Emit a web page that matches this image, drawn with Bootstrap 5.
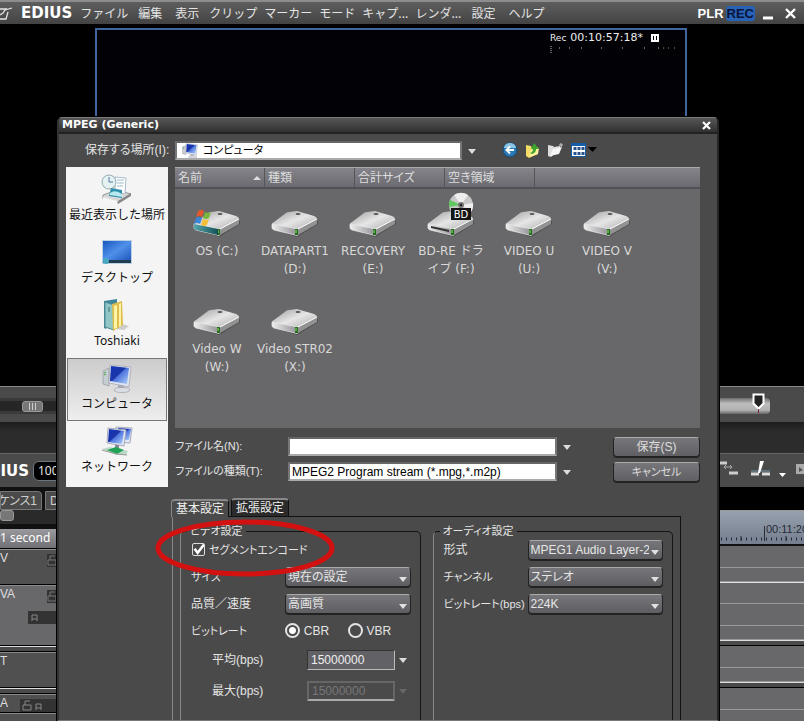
<!DOCTYPE html>
<html lang="ja">
<head>
<meta charset="utf-8">
<meta name="viewport" content="width=device-width, initial-scale=1">
<title>EDIUS</title>
<link href="https://cdn.jsdelivr.net/npm/bootstrap@5.3.0/dist/css/bootstrap.min.css" rel="stylesheet">
<style>
:root{--face:#4a4a4a;--line:#8a8a8a;--pane:#68686a}
body{background:#000;color:#e4e4e4;font:12px/18px "Noto Sans","Noto Sans CJK JP",sans-serif}
a{color:inherit;text-decoration:none}
button{font:inherit;color:inherit}
.bare{background:none;border:0;padding:0}
.brand{font:bold 15px/20px "DejaVu Sans",sans-serif;color:#fff}
.ui{font-family:"Liberation Sans","Noto Sans CJK JP",sans-serif;font-feature-settings:"palt"}
.ui input,.ui select,.ui button{font-family:inherit;font-feature-settings:inherit}
.kana{font-size:11px}
/* main window */
.app-menu{height:24px;background:linear-gradient(#5e5e5e,#434343);border-top:2px solid #8d8d8d;font-family:"Noto Sans CJK JP",sans-serif}
.menu-list{gap:7px;margin-left:8px}
.menu-wide{padding:0 3px}
.mode{font:bold 13px/15px "Liberation Sans",sans-serif}
.bare.mode-on{background:#2862b4;color:#08143a;border-radius:3px;padding:0 1px;margin-left:2px}
.preview{height:362px;padding:4px 117px 0 95px}
.screen{border:2px solid #3f659f;border-bottom:0;background:#020206;padding:0 9px}
.timecode{font:11px/16px "DejaVu Sans",sans-serif;color:#eee}
.timecode small{font-size:9px}
.seek{height:36px;background:var(--face);border-top:1px solid var(--line);padding-top:11px}
.seek>div{padding-right:34px}
.groove{height:16px;background:#262626;border:3px solid #3a3a3a;border-width:3px 0;padding-left:22px}
.grip{width:21px;height:11px;border-radius:3px;background:#777;border:1px solid #999}
.grip-half{width:14px}
.seek-fill{width:50px;height:16px;background:linear-gradient(#6e6e6e,#bdbdbd 35%,#b2b2b2 75%,#666);border-radius:0 4px 4px 0}
.band{height:32px;background:linear-gradient(#1c1c1c,#2c2c2c 30%);border-bottom:1px solid #666}
.tools{height:33px;background:var(--face)}
.crop-end{overflow:hidden;white-space:nowrap}
.tail{width:29px}
.heads{width:56px}
.seq{height:23px;background:#111;gap:3px}
.seq a{background:#4a4a4a;border:1px solid #777;border-radius:0 4px 0 0;height:19px;color:#ccc}
.seq .now{width:42px}
.zoombar{height:19px;background:#2a2a2a;border-bottom:5px solid #111}
.unit{height:20px;background:linear-gradient(#9a9a9e,#707074);border-bottom:1px solid #000;color:#fff}
.head{background:#505050;border-top:1px solid #8b8b8b;border-bottom:1px solid #000;font:12px/16px "Liberation Sans",sans-serif;color:#ddd}
.lock{background:#333;color:#777;width:28px;height:13px}
.lock-one{width:9px}
.lock-two{width:36px}
.head-s{height:36px}.head-l{height:61px;background:#68686a}
.view{width:85px}
.lane{background:var(--pane);border-bottom:1px solid #999}
.lane-a{height:22px}.lane-b{height:14px}
.ruler{height:36px;background:linear-gradient(#97a0ad,#747e8e);border-top:1px solid #999;border-bottom:2px solid #111}
.divider{height:6px;background:var(--face);border-top:1px solid #ddd;border-bottom:1px solid #000}
.marker{position:absolute;top:393px;right:39px}
/* dialog */
.dialog{position:absolute;top:117px;left:57px;right:85px;bottom:0;background:var(--face);border:1px solid #777;border-right:2px solid #262626;border-left:2px solid #333;border-radius:5px 5px 0 0;overflow:hidden;box-shadow:0 0 0 1px #000}
.caption-bar{height:16px;background:linear-gradient(#575757,#303030);border-bottom:2px solid #222;padding:0 6px 0 3px;font:bold 11px/14px "DejaVu Sans",sans-serif;color:#fff}
.look{height:33px;padding:7px 17px 8px 26px}
.look label{width:90px}
.place-box{width:287px}
.look-tools{margin-left:14px;gap:8px;padding-left:6px}
.field{height:19px;background:#fff;color:#000;border:2px solid #777;border-top-color:#666;border-bottom:2px solid #aaa;border-radius:0;padding:0 0 0 2px;font-size:12px;line-height:15px;min-width:0}
.drop{width:20px;height:18px}
.drop::before{content:"";display:block;width:0;margin:2px auto 0;border:4px solid transparent;border-top:5px solid #ddd;border-bottom:0}
.drop.off::before{border-top-color:#666}
.middle{padding:0 17px 0 7px;gap:7px}
.places{width:102px;background:#f4f4f4;height:320px;padding:2px 1px}
.place{height:63px;color:#111;border:1px solid transparent;padding-top:3px}
.place.on{border-color:#777;background:linear-gradient(#ccc,#eee)}
.place svg{width:32px;height:32px}
.place span{line-height:18px;margin-top:1px;white-space:nowrap}
.files{height:261px;background:var(--pane)}
.cols{height:22px;background:linear-gradient(#84848a,#6a6a70);border-top:1px solid #aaa;border-bottom:2px solid #525256;color:#ddd}
.cols button{width:90px;text-align:left;border-right:1px solid #555;padding:0 3px;height:19px}
.drives{padding:1px 3px 0}
.drive{width:78px;height:98px;color:#d8d8d8;font:12px/18px "DejaVu Sans","Noto Sans CJK JP",sans-serif;padding-top:2px}
.drive svg{width:50px;height:46px;margin-bottom:4px}
.drive span{white-space:nowrap}
.names{padding-top:9px}
.fname{height:25px}
.fname label{width:113px}
.push{width:87px;height:20px;margin-left:36px;border:1px solid #222;border-top-color:#aaa;border-radius:4px;background:linear-gradient(#77777b,#606064);padding:0;line-height:15px;color:#ddd;box-shadow:0 1px #222}
.settings{padding-top:15px}
.tabs{margin:-4px 0 0 -4px;gap:2px}
.tabs button{height:18px;padding:0 4px;border:1px solid #111;border-bottom:0;border-top:2px solid #888;border-radius:4px 4px 0 0;background:#2b2b2b;line-height:15px;color:#eee}
.tabs .on{background:var(--face);border-left-color:#888;position:relative;margin-bottom:-1px}
.sheet{margin:0 19px 0 -3px;border:1px solid #111;border-left-color:#888;padding:5px 7px 0;gap:12px;height:240px}
.group{flex:1 1 0;min-width:0;border:1px solid #151515;border-left-color:#888;border-radius:5px;padding:0 9px 0 10px;margin:0;height:240px}
.group legend{float:none;width:auto;line-height:18px;margin:0 0 -4px -4px;padding:0 3px;background:var(--face)}
.opt{height:27px}
.opt>label:first-child{width:94px;white-space:nowrap}
.sound .opt>label:first-child{width:84px}
.choice{height:20px;min-width:0;flex:1;color:#e6e6e6;border:1px solid #222;border-top-color:#aaa;border-radius:4px;padding:0 13px 0 2px;font-size:12px;line-height:16px;background:url("data:image/svg+xml,%3Csvg xmlns='http://www.w3.org/2000/svg' viewBox='0 0 8 5'%3E%3Cpath fill='%23e0e0e0' d='M0 0h8L4 5z'/%3E%3C/svg%3E") right 3px bottom 4px/8px 5px no-repeat,linear-gradient(#77777b,#5e5e62);box-shadow:0 1px #222}
.tick{appearance:none;width:13px;height:13px;border:1px solid #ddd;border-radius:2px;margin:0 0 0 1px;background:url("data:image/svg+xml,%3Csvg xmlns='http://www.w3.org/2000/svg' viewBox='0 0 12 12'%3E%3Cpath fill='none' stroke='%23fff' stroke-width='2.4' d='M2 5l3 4 6-8'/%3E%3C/svg%3E") center/12px no-repeat}
.dot{appearance:none;width:15px;height:15px;border:2px solid #e4e4e4;border-radius:50%;margin:0 4px 0 0}
.dot:checked{background:radial-gradient(#fff 0 3px,transparent 4px)}
.dot+label{width:44px}
.rate{height:31px;padding-left:21px}
.rate input{width:88px;height:20px;background:#626266;color:#eee;border:1px solid #333;border-bottom-color:#bbb;border-right-color:#bbb;font-size:12px;line-height:16px;padding:0 3px}
.rate input:disabled{background:var(--face);border:2px solid #666;border-bottom-color:#aaa;color:#777}
.rate label{width:95px;flex-shrink:0}
.rate .drop{width:18px}
.ring{position:absolute;left:95px;top:400px;width:182px;height:60px;pointer-events:none}
</style>
<script src="https://cdn.jsdelivr.net/npm/bootstrap@5.3.0/dist/js/bootstrap.bundle.min.js"></script>
</head>
<body class="vh-100 overflow-hidden position-relative">
<svg class="position-absolute" width="0" height="0" aria-hidden="true">
<defs>
<linearGradient id="gTop" x1="0" y1="0" x2="1" y2="1"><stop offset="0" stop-color="#999"/><stop offset=".5" stop-color="#e6e6e6"/><stop offset="1" stop-color="#aaa"/></linearGradient>
<linearGradient id="gFront"><stop offset="0" stop-color="#eee"/><stop offset="1" stop-color="#8e8e93"/></linearGradient>
<linearGradient id="gBlue" x1="0" y1="0" x2="1" y2="1"><stop offset="0" stop-color="#1534b8"/><stop offset=".45" stop-color="#1b35a8"/><stop offset=".5" stop-color="#4d74dd"/><stop offset="1" stop-color="#b5d4fb"/></linearGradient>
<linearGradient id="gDesk" x1="0" y1="0" x2="1" y2="1"><stop offset="0" stop-color="#1a56c0"/><stop offset=".5" stop-color="#4f90ea"/><stop offset="1" stop-color="#2158bd"/></linearGradient>
<linearGradient id="gTeal"><stop offset="0" stop-color="#56a6ac"/><stop offset="1" stop-color="#155157"/></linearGradient>
</defs>
<symbol id="hdd" viewBox="0 0 50 46">
<path d="M5 38l22 7 21-13v-3L28 42z" fill="#333" opacity=".5"/>
<path d="M2 32Q2 31 4 30L16 21q1-1 3-1l8-1 17 5q3 1 3 3L28 38z" fill="url(#gTop)"/>
<path d="M2 32l26 5v6q-1 1-3 0L4 38q-2-1-2-2z" fill="url(#gFront)" stroke="#eee" stroke-width=".7"/>
<path d="M28 37l19-10v5L28 43z" fill="#929292"/><path d="M28 37l19-10" stroke="#fff"/>
<ellipse cx="28" cy="22" rx="2.5" ry="1" fill="#555"/><rect x="25" y="37" width="3" height="6" fill="#276b20"/><path d="M26 38v3" stroke="#8fdf65"/>
</symbol>
<symbol id="osd" viewBox="0 0 50 46"><use href="#hdd"/><path d="M2 32l24 5v6L4 38q-2-1-2-2z" fill="url(#gTeal)"/>
<path d="M6 19q3-2 6 0l-2 6q-3-2-6 0z" fill="#df592d"/><path d="M13 20q3 2 6 0l-2 6q-3 2-6 0z" fill="#79b83c"/><path d="M4 26q3-2 6 0l-2 6q-3-2-6 0z" fill="#3b84d6"/><path d="M11 27q3 2 6 0l-2 6q-3 2-6 0z" fill="#f4be3a"/></symbol>
<symbol id="pc" viewBox="0 0 32 32"><path d="M2 9l6-3v18l-6-2z" fill="#c5ccd2" stroke="#8a9299" stroke-width=".6"/><path d="M3 11l2-1M3 13l2-1" stroke="#4a4"/><path d="M17 22h6v6h-6z" fill="#aab"/><ellipse cx="21" cy="28" rx="8" ry="2.6" fill="#d9dee4" stroke="#999" stroke-width=".6"/><path d="M9 3l21 2-2 20-20-4z" fill="#dce4ee" stroke="#99a" stroke-width=".6"/><path d="M10 4l18 2-2 16-17-3z" fill="url(#gBlue)"/></symbol>
</svg>

<header class="app-menu d-flex align-items-center pe-2">
<svg width="13" height="16" viewBox="0 0 13 16" fill="none" stroke="#e5e5e5" stroke-width="1.300"><path d="M0 4h7M0 14h6l2-7M0 10l3-2 2-3 7-2"/></svg>
<a href="#" class="brand ms-2">EDIUS</a>
<nav class="menu-list d-flex text-nowrap">
<a href="#">ファイル</a><a href="#" class="menu-wide">編集</a><a href="#" class="menu-wide">表示</a><a href="#">クリップ</a><a href="#">マーカー</a><a href="#">モード</a><a href="#">キャプ...</a><a href="#">レンダ...</a><a href="#" class="menu-wide">設定</a><a href="#" class="menu-wide">ヘルプ</a>
</nav>
<div class="ms-auto d-flex align-items-center text-white">
<button class="bare mode">PLR</button><button class="bare mode mode-on">REC</button>
<button class="bare ms-2" aria-label="最小化"><svg width="10" height="14" class="d-block"><path d="M0 12h10" stroke="#fff" stroke-width="3"/></svg></button>
<button class="bare ms-2 ps-1" aria-label="閉じる"><svg width="11" height="11" class="d-block"><path d="M1 1l9 9M10 1l-9 9" stroke="#fff" stroke-width="2.400"/></svg></button>
</div>
</header>

<main>
<section class="preview d-flex"><div class="screen flex-grow-1 d-flex justify-content-end">
<div class="timecode"><div class="d-flex align-items-center gap-1"><small>Rec</small><span>00:10:57:18*</span><svg width="8" height="8" class="ms-1"><path d="M0 0h8v8H0z" fill="#fff"/><path d="M2.500 2v4M5.500 2v4" stroke="#000"/></svg></div>
<svg width="126" height="8" class="d-block"><path d="M1 0v8" stroke="#bbb" stroke-dasharray="1 1"/><path d="M9 2h1M19 2h1M31 2h1M51 2h1M72 2h1M94 2h1M108 2h1" stroke="#ccc"/><path d="M113 2h1M118 2h1M124 2h1" stroke="#b84"/></svg></div>
</div></section>
<section class="seek"><div class="d-flex"><div class="groove flex-grow-1 d-flex align-items-center"><div class="grip d-flex justify-content-center align-items-center"><svg width="9" height="7"><path d="M1.500 0v7M4.500 0v7M7.500 0v7" stroke="#ccc"/></svg></div></div><div class="seek-fill"></div></div></section>
<section class="band"></section>
<section class="tools d-flex align-items-center">
<div class="d-flex"><div class="tail d-flex justify-content-end crop-end brand flex-shrink-0">EDIUS</div><span class="ms-1 ps-1 border border-secondary rounded bg-black text-nowrap">100T</span></div>
<svg class="ms-auto" width="86" height="24" viewBox="0 0 86 24"><path d="M0 4h9M11 14h9" stroke="#ccc" stroke-width="3"/><path d="M6 8h8M8 6l-2 2 2 2M12 6l2 2-2 2" stroke="#aaa" fill="none"/><path d="M33 15h8M44 15h8" stroke="#ddd" stroke-width="3"/><path d="M33 12h19" stroke="#79a"/><path d="M42 2h4l-4 12h-2z" fill="#fff"/><path d="M61 14h7l-3.500 4z" fill="#fff"/><path d="M78 5h8v10h-8z" fill="#aaa"/><path d="M81 8l4 3-4 2z" fill="#555"/></svg>
</section>
<section class="d-flex justify-content-between">
<div class="heads text-nowrap">
<div class="seq d-flex align-items-end ui"><a href="#" class="now d-flex justify-content-end crop-end flex-shrink-0 pe-1">シーケンス1</a><a href="#" class="px-1">D</a></div>
<div class="zoombar"><div class="grip grip-half"></div></div>
<div class="unit">1 second</div>
<div class="head head-s d-flex justify-content-between"><span>V</span><svg class="lock lock-one mt-1" viewBox="0 0 9 13"><path d="M1 6h8v5H1zM3 6V2h5" fill="none" stroke="#777"/></svg></div>
<div class="head head-l"><div class="d-flex justify-content-between"><span>VA</span><svg class="lock lock-one mt-1" viewBox="0 0 9 13"><path d="M1 6h8v5H1zM3 6V2h5" fill="none" stroke="#777"/></svg></div><svg class="lock d-block ms-auto mt-2" viewBox="0 0 28 13"><path d="M4 10V4h5v6M4 8h5" fill="none" stroke="#888"/></svg></div>
<div class="divider"></div>
<div class="head head-s">T</div><div class="divider"></div>
<div class="head d-flex justify-content-between"><span>A</span><svg class="lock lock-two mt-1" viewBox="0 0 36 13"><path d="M3 6h8v5H3zM5 6V2h5M16 11V5h5v6M16 9h5" fill="none" stroke="#888"/></svg></div><div class="head head-s"></div>
</div>
<div class="view text-nowrap overflow-hidden"><div class="seq bg-black"></div>
<div class="ruler d-flex"><svg width="85" height="34" class="flex-shrink-0"><path d="M45.500 15v15" stroke="#252b38"/><path d="M2 28h83" stroke="#252b38" stroke-width="3" stroke-dasharray="1 4"/><path d="M22 25v5M67 25v5" stroke="#252b38"/><text x="47" y="22" font-family="Liberation Sans" font-size="11" fill="#252b38">00:11:20</text></svg></div>
<div class="lane lane-a"></div><div class="lane lane-b"></div><div class="lane lane-a border-top border-black"></div><div class="lane lane-a"></div><div class="lane lane-b"></div><div class="divider"></div><div class="lane lane-a"></div><div class="lane lane-b"></div><div class="divider"></div><div class="lane lane-a"></div><div class="lane lane-a"></div></div>
</section>
</main>
<svg class="marker" width="13" height="20"><path d="M1.500 1.500h10v9l-5 5-5-5z" fill="#222" stroke="#fff" stroke-width="2"/><path d="M6.500 16v4" stroke="#723"/></svg>

<div class="dialog" role="dialog" aria-labelledby="cap">
<div class="caption-bar d-flex justify-content-between align-items-center"><span id="cap">MPEG (Generic)</span><button class="bare" aria-label="ダイアログを閉じる"><svg class="d-block" width="9" height="9"><path d="M1 1l7 7M8 1L1 8" stroke="#fff" stroke-width="2.200"/></svg></button></div>
<form>
<div class="look d-flex align-items-center ui"><label for="loc">保存する場所(I):</label>
<div class="field place-box d-flex align-items-center gap-1 p-0 flex-shrink-0"><svg width="18" height="15" viewBox="0 2 32 28" class="ms-1 flex-shrink-0"><use href="#pc" width="32" height="32"/></svg><input id="loc" class="bare kana w-100" value="コンピュータ"></div>
<button type="button" class="bare drop" aria-label="場所の一覧"></button>
<div class="look-tools d-flex">
<button type="button" class="bare" aria-label="戻る"><svg class="d-block" width="16" height="18" viewBox="0 0 16 18"><circle cx="8" cy="9" r="7" fill="#2a78b5" stroke="#15486f"/><path d="M2 7a6 5 0 0112 0z" fill="#8cc5e8"/><path d="M12 9H5M8 5.500L4.500 9 8 12.500" stroke="#fff" stroke-width="2" fill="none"/></svg></button>
<button type="button" class="bare" aria-label="上へ"><svg class="d-block" width="14" height="18" viewBox="0 0 14 18"><path d="M0 4l5 1 1 2 6-1v7l-9 4-3-2z" fill="#f2dc66"/><path d="M3 16l2-7 8-2-1 6z" fill="#fff0a0"/><path d="M6 13q4-1 4-5h3L8 2 5 8h2q0 3-3 4z" fill="#39a52c"/></svg></button>
<button type="button" class="bare" aria-label="新しいフォルダ"><svg class="d-block" width="15" height="18" viewBox="0 0 15 18"><path d="M0 4l5 1 1 1 6-1v3L3 16l-3-1z" fill="#ddd"/><path d="M2 15l3-7 9-2-3 7z" fill="#f6f6f6"/><path d="M13 2v4M11 4h4" stroke="#ccc"/></svg></button>
<button type="button" class="bare" aria-label="表示"><svg class="d-block" width="26" height="18" viewBox="0 0 26 18"><path d="M0 2h15v14H0z" fill="#165da8"/><path d="M1 5h13v10H1z" fill="#fff"/><path d="M2.500 6h3v3h-3zM6.500 6h3v3h-3zM10.500 6h3v3h-3zM2.500 11h3v3h-3zM6.500 11h3v3h-3zM10.500 11h3v3h-3z" fill="#28518a"/><path d="M17 6h9l-4.500 5z" fill="#000"/></svg></button>
</div></div>

<div class="middle d-flex">
<nav class="places flex-shrink-0 d-flex flex-column text-center">
<a href="#" class="place d-flex flex-column align-items-center"><svg viewBox="0 0 32 32"><path d="M2 22l14-5 14 4-13 9-15-4z" fill="#d8d8d8" stroke="#999"/><path d="M2 24l14 4v3L2 27z" fill="#f7f7f7"/><path d="M17 31V28l13-8v3z" fill="#888"/><path d="M14 4l11 1-1 16-10-2z" fill="#fff" stroke="#abc"/><path d="M16 7h7M16 10h7M16 13h6" stroke="#9bc"/><circle cx="8" cy="9" r="7" fill="#e5f2f4" stroke="#93a9ad"/><path d="M8 4v5h4" stroke="#579" fill="none"/><path d="M10 15l11 2v8l-13-2z" fill="#2f8faa"/><path d="M9 20q5-4 12 1v3l-12-2z" fill="#b7e9ee"/></svg><span>最近表示した場所</span></a>
<a href="#" class="place d-flex flex-column align-items-center"><svg viewBox="0 0 32 32"><path d="M1 4h30v24H1z" fill="#bcd0e3"/><path d="M2 5h28v19H2z" fill="url(#gDesk)"/><path d="M2 24h28v3H2z" fill="#213d50"/><circle cx="5" cy="25" r="3" fill="#49a7c0"/></svg><span>デスクトップ</span></a>
<a href="#" class="place d-flex flex-column align-items-center"><svg viewBox="0 0 32 32"><path d="M21 25l7 2-5 4-8-1z" fill="#ccc"/><path d="M3 2l13-2v6L5 30l-2-1z" fill="#3d859b"/><path d="M4 3l9 3v25l-9-3z" fill="#90c6c5" stroke="#528b91"/><path d="M11 5l10-3 1 24-10 6z" fill="#dfbd4d"/><path d="M13 7l3-1v23l-3 1zM18 5l2-1v23l-2 1z" fill="#fff3a8"/><path d="M8 8v5" stroke="#376"/></svg><span>Toshiaki</span></a>
<a href="#" class="place on d-flex flex-column align-items-center" aria-current="true"><svg viewBox="0 0 32 32"><use href="#pc"/></svg><span>コンピュータ</span></a>
<a href="#" class="place d-flex flex-column align-items-center"><svg viewBox="0 0 32 32"><path d="M15 2l16 1-2 15-13-1z" fill="#e1eaf4" stroke="#aab"/><path d="M17 3l13 1-2 11-11-1z" fill="url(#gBlue)"/><path d="M7 3l18 2-2 16-17-3z" fill="#e1eaf4" stroke="#aab"/><path d="M8 4l15 2-2 13-14-2z" fill="url(#gBlue)"/><path d="M14 20h4v4h-4z" fill="#889"/><path d="M1 24l8-2 18 4-2 4-9 0z" fill="#bcd8c8"/><path d="M6 25l9-3 8 3-7 4z" fill="#20a354"/><path d="M1 25l14 4 11 1" stroke="#999" fill="none"/></svg><span>ネットワーク</span></a>
</nav>
<div class="flex-grow-1">
<div class="files overflow-hidden">
<div class="cols d-flex ui"><button type="button" class="bare d-flex justify-content-between align-items-center">名前<svg width="8" height="4"><path d="M0 4l4-4 4 4z" fill="#ddd"/></svg></button><button type="button" class="bare">種類</button><button type="button" class="bare">合計サイズ</button><button type="button" class="bare">空き領域</button></div>
<div class="drives d-flex flex-wrap text-center">
<a href="#" class="drive"><svg><use href="#osd"/></svg><br><span>OS (C:)</span></a>
<a href="#" class="drive"><svg><use href="#hdd"/></svg><br><span>DATAPART1<br>(D:)</span></a>
<a href="#" class="drive"><svg><use href="#hdd"/></svg><br><span>RECOVERY<br>(E:)</span></a>
<a href="#" class="drive"><svg viewBox="0 0 50 46"><use href="#hdd"/><path d="M5 34l18 4v2L5 36z" fill="#333"/>
<circle cx="35" cy="13" r="12" fill="#c9c9c9"/><path d="M35 13L28 3a12 12 0 0114 0zM35 13l10 7a12 12 0 002-9z" fill="#eee"/><path d="M35 13L24 8a12 12 0 00-1 7z" fill="#60c85c"/><circle cx="35" cy="13" r="3" fill="#777"/><circle cx="35" cy="13" r="1.2" fill="#222"/>
<rect x="25" y="16" width="20" height="12" fill="#151515"/><text x="35" y="26" font-family="DejaVu Sans" font-size="10" fill="#fff" text-anchor="middle">BD</text></svg><br><span>BD-RE ドラ<br>イブ (F:)</span></a>
<a href="#" class="drive"><svg><use href="#hdd"/></svg><br><span>VIDEO U<br>(U:)</span></a>
<a href="#" class="drive"><svg><use href="#hdd"/></svg><br><span>VIDEO V<br>(V:)</span></a>
<a href="#" class="drive"><svg><use href="#hdd"/></svg><br><span>Video W<br>(W:)</span></a>
<a href="#" class="drive"><svg><use href="#hdd"/></svg><br><span>Video STR02<br>(X:)</span></a>
</div></div>
<div class="names ui">
<div class="fname d-flex"><label for="fn" class="kana">ファイル名(N):</label><input id="fn" class="field flex-grow-1"><button type="button" class="bare drop" aria-label="ファイル名の履歴"></button><button type="button" class="push">保存(S)</button></div>
<div class="fname d-flex"><label for="ft" class="kana">ファイルの種類(T):</label><input id="ft" class="field flex-grow-1" value="MPEG2 Program stream (*.mpg,*.m2p)"><button type="button" class="bare drop" aria-label="種類の一覧"></button><button type="button" class="push kana">キャンセル</button></div>
</div>
<div class="settings ui">
<div class="tabs d-flex align-items-end"><button type="button" class="on">基本設定</button><button type="button">拡張設定</button></div>
<div class="sheet d-flex">
<fieldset class="group video"><legend class="kana">ビデオ設定</legend>
<div class="opt d-flex align-items-center gap-1"><input type="checkbox" id="seg" class="tick" checked><label for="seg" class="kana">セグメントエンコード</label></div>
<div class="opt d-flex align-items-center"><label for="sz" class="kana">サイズ</label><select id="sz" class="choice form-select"><option>現在の設定</option></select></div>
<div class="opt d-flex align-items-center"><label for="q">品質／速度</label><select id="q" class="choice form-select"><option>高画質</option></select></div>
<div class="opt d-flex align-items-center"><label for="cbr" class="kana">ビットレート</label><input type="radio" name="br" id="cbr" class="dot" checked><label for="cbr">CBR</label><input type="radio" name="br" id="vbr" class="dot"><label for="vbr">VBR</label></div>
<div class="rate d-flex align-items-center"><label for="avg">平均(bps)</label><input id="avg" value="15000000"><button type="button" class="bare drop" aria-label="平均の一覧"></button></div>
<div class="rate d-flex align-items-center"><label for="max">最大(bps)</label><input id="max" value="15000000" disabled><button type="button" class="bare drop off" disabled aria-label="最大の一覧"></button></div>
</fieldset>
<fieldset class="group sound"><legend class="kana">オーディオ設定</legend>
<div class="opt d-flex align-items-center"><label for="fmt">形式</label><select id="fmt" class="choice form-select"><option>MPEG1 Audio Layer-2</option></select></div>
<div class="opt d-flex align-items-center"><label for="ch" class="kana">チャンネル</label><select id="ch" class="choice form-select"><option>ステレオ</option></select></div>
<div class="opt d-flex align-items-center"><label for="abr" class="kana">ビットレート(bps)</label><select id="abr" class="choice form-select"><option>224K</option></select></div>
</fieldset>
</div></div>
</div></div>
</form>
<svg class="ring" viewBox="0 0 182 60"><ellipse cx="91" cy="30" rx="87" ry="26" fill="none" stroke="#d41111" stroke-width="5"/></svg>
</div>
</body>
</html>
